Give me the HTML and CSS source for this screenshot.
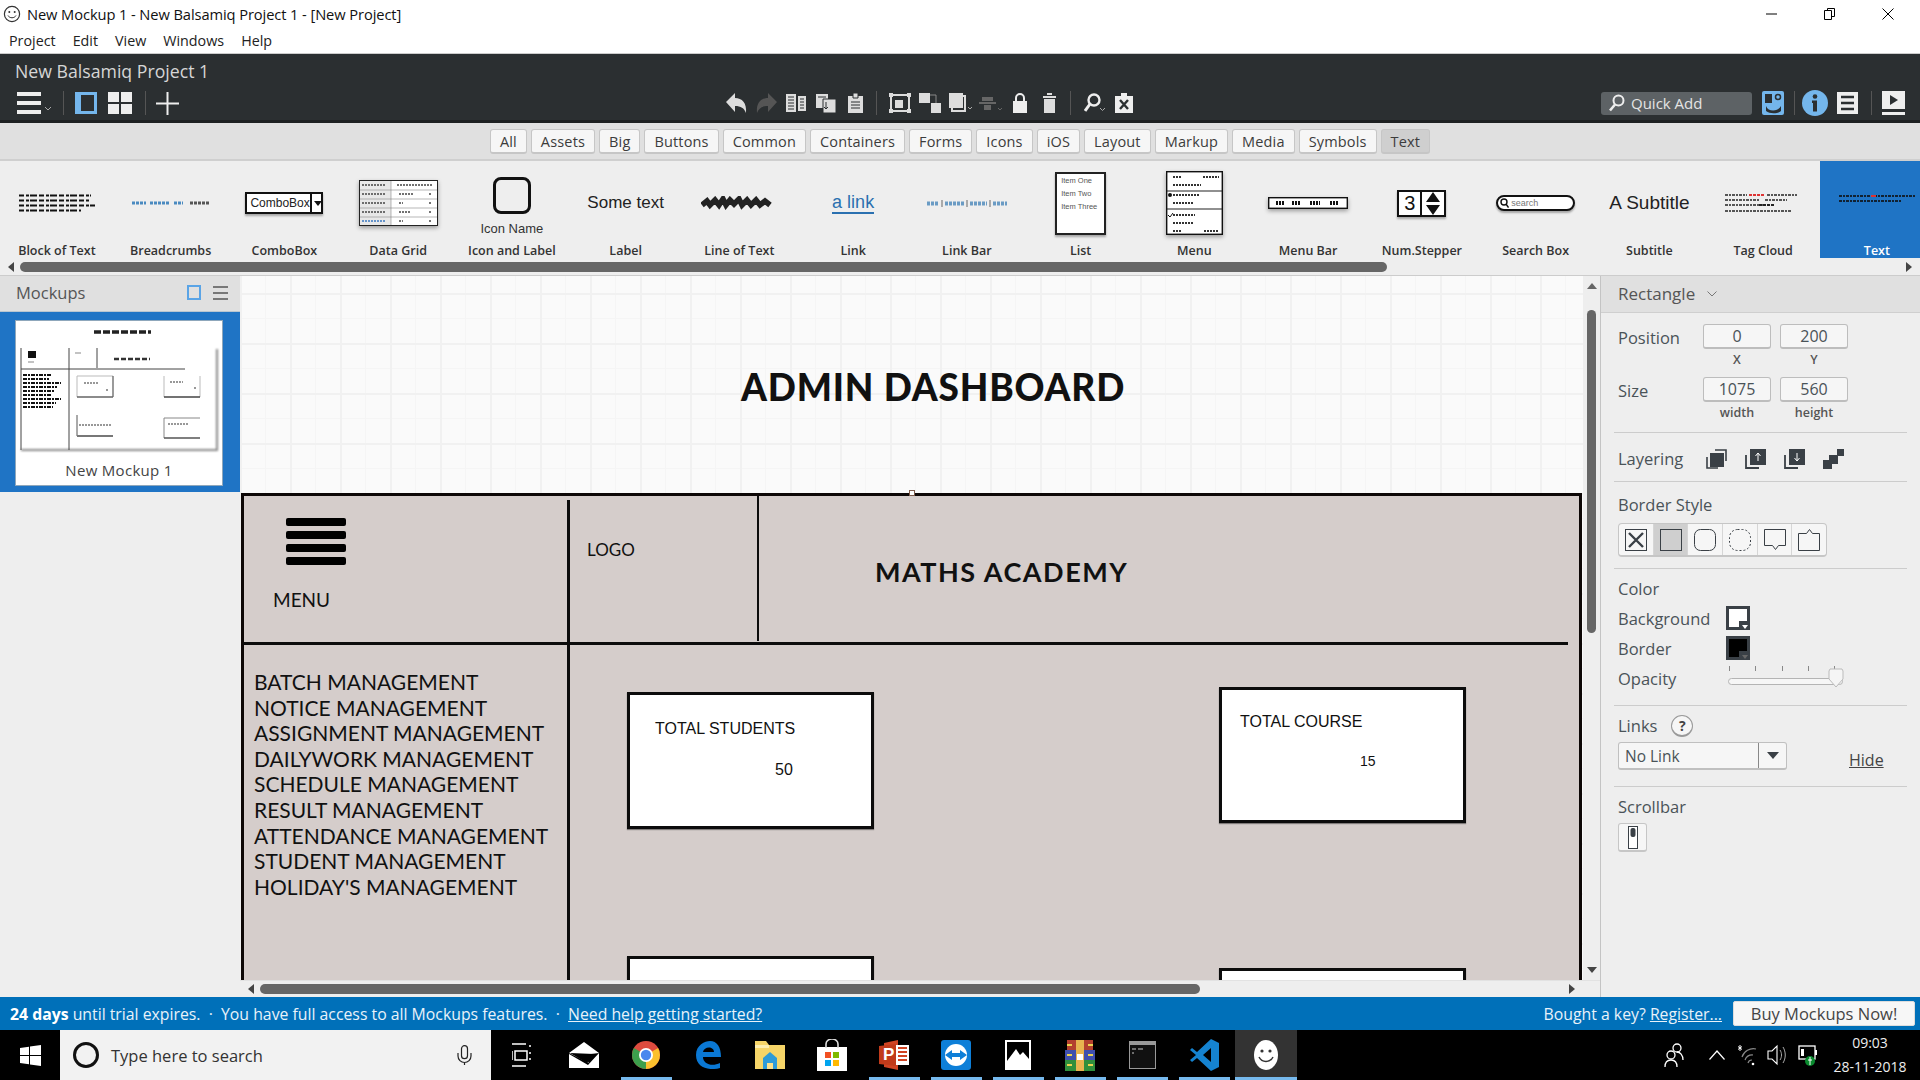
FILE: index.html
```html
<!DOCTYPE html>
<html lang="en">
<head>
<meta charset="utf-8">
<title>New Mockup 1 - New Balsamiq Project 1 - [New Project]</title>
<link rel="stylesheet" href="styles.css">
</head>
<body>
<div class="app">
  <header class="titlebar">
    <svg class="appicon" width="18" height="18" viewBox="0 0 18 18"><circle cx="9" cy="9" r="7.6" fill="#fff" stroke="#333" stroke-width="1.2"/><circle cx="6.3" cy="7" r="1" fill="#333"/><circle cx="11.7" cy="7" r="1" fill="#333"/><path d="M5 10.500c1.500 3 6.500 3 8 0" fill="none" stroke="#333"/></svg>
    <span class="titletext">New Mockup 1 - New Balsamiq Project 1 - [New Project]</span>
    <div class="winctl">
      <svg width="12" height="12" viewBox="0 0 12 12"><path d="M0 6h11" stroke="#000"/></svg>
      <svg width="12" height="12" viewBox="0 0 12 12"><path d="M3.500 2.500V.5h7v8h-3M.5 2.500h7v9h-7z" fill="none" stroke="#000"/></svg>
      <svg width="12" height="12" viewBox="0 0 12 12"><path d="M.5.5l11 11M11.500.5l-11 11" stroke="#000"/></svg>
    </div>
  </header>
  <nav class="menubar"><span>Project</span><span>Edit</span><span>View</span><span>Windows</span><span>Help</span></nav>

  <section class="toolbar">
    <div class="projname">New Balsamiq Project 1</div>
    <div class="toolrow">
      <div class="tgroup tleft">
        <svg width="36" height="22" viewBox="0 0 36 22"><path d="M0 0h24v4H0zM0 9h24v4H0zM0 18h24v4H0z" fill="#eee"/><path d="M28 15l3 3 3-3" fill="none" stroke="#aaa"/></svg>
        <i class="tsep s1"></i>
        <svg class="ic-panel" width="22" height="22" viewBox="0 0 22 22"><path d="M0 0h22v22H0z" fill="#74b6ec"/><path d="M6 3h13v16H6z" fill="#2b2f31"/></svg>
        <svg class="ic-grid" width="24" height="22" viewBox="0 0 24 22"><path d="M0 0h11v10H0zM13 0h11v10H13zM0 12h11v10H0zM13 12h11v10H13z" fill="#eee"/></svg>
        <i class="tsep s2"></i>
        <svg class="ic-plus" width="23" height="23" viewBox="0 0 23 23"><path d="M10.500 0h2v23h-2zM0 10.500h23v2H0z" fill="#eee"/></svg>
      </div>
      <div class="tgroup tcenter">
        <svg width="21" height="20" viewBox="0 0 21 20"><path d="M9 0v5c7 0 12 5 11 15-2-5-5-7-11-7v6L0 9z" fill="#ddd"/></svg>
        <svg width="21" height="20" viewBox="0 0 21 20"><path d="M12 0v5C5 5 0 10 1 20c2-5 5-7 11-7v6l9-10z" fill="#555"/></svg>
        <svg width="20" height="20" viewBox="0 0 20 20"><path d="M0 1h10v18H0z" fill="#ddd"/><path d="M2 4h6M2 7h6M2 10h6M2 13h6M2 16h6" stroke="#2b2f31"/><path d="M12 3h8v15h-8z" fill="#ddd"/><path d="M14 6h4M14 9h4M14 12h4M14 15h4" stroke="#2b2f31"/></svg>
        <svg width="20" height="20" viewBox="0 0 20 20"><path d="M0 1h12v14H0z" fill="#ddd"/><path d="M7 6h13v14H7z" fill="#ddd" stroke="#2b2f31"/><path d="M2 4h8M10 9v7l-2-2M10 16l2-2" stroke="#2b2f31" fill="none"/></svg>
        <svg width="15" height="20" viewBox="0 0 15 20"><path d="M0 3h15v17H0z" fill="#ddd"/><path d="M5 0h5v5H5z" fill="#ddd" stroke="#2b2f31"/><path d="M3 9h9M3 12h9M3 15h9" stroke="#2b2f31"/></svg>
        <i class="tsep"></i>
        <svg width="22" height="20" viewBox="0 0 22 20"><path d="M2 2h18v16H2z" fill="none" stroke="#ddd" stroke-width="2"/><path d="M0 0h4v4H0zM18 0h4v4h-4zM0 16h4v4H0zM18 16h4v4h-4z" fill="#ddd"/><path d="M6 7h8v8H6z" fill="#ddd"/></svg>
        <svg width="22" height="20" viewBox="0 0 22 20"><path d="M0 0h11v10H0zM12 10h10v10H12z" fill="#ddd"/><path d="M11 2h6v8" fill="none" stroke="#888"/></svg>
        <svg width="25" height="20" viewBox="0 0 25 20"><path d="M0 0h14v15H0z" fill="#ddd"/><path d="M14 3h2v15H3v-3" fill="none" stroke="#ddd" stroke-width="2"/><path d="M19 14l2 2 2-2" fill="none" stroke="#aaa"/></svg>
        <svg width="23" height="20" viewBox="0 0 23 20"><path d="M0 9h17v2H0zM3 4h11v4H3zM5 12h7v5H5z" fill="#666"/><path d="M19 15l2 2 2-2" fill="none" stroke="#666"/></svg>
        <svg width="14" height="20" viewBox="0 0 14 20"><path d="M0 8h14v12H0z" fill="#eee"/><path d="M3 8V5a4 4 0 0 1 8 0v3" fill="none" stroke="#eee" stroke-width="2"/></svg>
        <svg width="13" height="20" viewBox="0 0 13 20"><path d="M1 6h11v14H1zM0 3h13v2H0zM4 0h5v2H4z" fill="#ddd"/></svg>
        <i class="tsep"></i>
        <svg width="22" height="20" viewBox="0 0 22 20"><circle cx="10" cy="7" r="5.500" fill="none" stroke="#eee" stroke-width="2.400"/><path d="M6 11l-5 7" stroke="#eee" stroke-width="3"/><path d="M16 15l2.500 2.500 2.500-2.500" fill="none" stroke="#aaa"/></svg>
        <svg width="18" height="20" viewBox="0 0 18 20"><path d="M0 3h18v17H0z" fill="#eee"/><path d="M6 0h6v4H6z" fill="#eee"/><path d="M5 7l8 9M13 7l-8 9" stroke="#2b2f31" stroke-width="2.400"/></svg>
      </div>
      <div class="tgroup tright">
        <div class="quickadd">
          <svg width="18" height="18" viewBox="0 0 18 18"><circle cx="10.500" cy="6.500" r="5" fill="none" stroke="#eee" stroke-width="2"/><path d="M7 10.500l-5 6" stroke="#eee" stroke-width="2.600"/></svg>
          <span>Quick Add</span>
        </div>
        <svg width="22" height="24" viewBox="0 0 22 24"><rect width="22" height="24" rx="2" fill="#74b6ec"/><path d="M3 3h7v9H3z" fill="#2b2f31"/><circle cx="16" cy="6" r="2.500" fill="none" stroke="#2b2f31" stroke-width="1.500"/><path d="M4 15c2 6 12 6 15 0v5c-4 3-11 3-15 0z" fill="#2b2f31"/></svg>
        <i class="tsep"></i>
        <svg width="26" height="26" viewBox="0 0 26 26"><circle cx="13" cy="13" r="13" fill="#74b6ec"/><circle cx="13" cy="6.500" r="2.300" fill="#2b2f31"/><path d="M10 10.500h5v11h-4V13h-1z" fill="#2b2f31"/></svg>
        <svg width="21" height="22" viewBox="0 0 21 22"><path d="M0 0h21v22H0z" fill="#eee"/><path d="M4 5h13M4 11h13M4 17h13" stroke="#2b2f31" stroke-width="2.400"/></svg>
        <i class="tsep"></i>
        <svg width="23" height="24" viewBox="0 0 23 24"><path d="M0 0h23v18H0z" fill="#eee"/><path d="M8 4l8 5-8 5z" fill="#2b2f31"/><path d="M0 21h23v3H0z" fill="#eee"/></svg>
      </div>
    </div>
  </section>

  <section class="filters">
    <button class="chip">All</button><button class="chip">Assets</button><button class="chip">Big</button><button class="chip">Buttons</button><button class="chip">Common</button><button class="chip">Containers</button><button class="chip">Forms</button><button class="chip">Icons</button><button class="chip">iOS</button><button class="chip">Layout</button><button class="chip">Markup</button><button class="chip">Media</button><button class="chip">Symbols</button><button class="chip on">Text</button>
  </section>

  <section class="library">
    <div class="libitems">
      <div class="lib"><div class="pv"><svg class="soft" width="76" height="18" viewBox="0 0 76 18"><path d="M0 1.500h72M0 6.500h70M0 11.500h76M0 16.500h62" stroke="#111" stroke-width="2.200" stroke-dasharray="5 2 3 1 7 2"/></svg></div><span>Block of Text</span></div>
      <div class="lib"><div class="pv"><svg class="soft" width="78" height="6" viewBox="0 0 78 6"><path d="M0 3h14M18 3h20M42 3h9" stroke="#4a8ac0" stroke-width="3" stroke-dasharray="3 1"/><path d="M58 3h20" stroke="#555" stroke-width="3" stroke-dasharray="3 1"/></svg></div><span>Breadcrumbs</span></div>
      <div class="lib"><div class="pv"><div class="pcombo"><span>ComboBox</span><b></b></div></div><span>ComboBox</span></div>
      <div class="lib"><div class="pv"><svg class="soft shadow" width="79" height="46" viewBox="0 0 79 46"><rect x=".5" y=".5" width="78" height="45" fill="#fff" stroke="#222"/><rect x="1" y="1" width="31" height="44" fill="#e8e8e8"/><path d="M32 1v44M1 10h77M1 19h77M1 28h77M1 37h77" stroke="#888" stroke-width=".6"/><path d="M3 5h24M38 5h36M3 14h24M40 14h14M70 14h3M3 23h24M40 23h4M70 23h3M3 32h24M40 32h12M70 32h3M40 41h4M70 41h3" stroke="#444" stroke-width="1.500" stroke-dasharray="2 1"/><path d="M3 41h24" stroke="#3b78c0" stroke-width="1.500" stroke-dasharray="2 1"/></svg></div><span>Data Grid</span></div>
      <div class="lib"><div class="pv pvcol"><div class="picon"></div><span class="pname">Icon Name</span></div><span>Icon and Label</span></div>
      <div class="lib"><div class="pv"><span class="psome">Some text</span></div><span>Label</span></div>
      <div class="lib"><div class="pv"><svg class="soft" width="76" height="14" viewBox="0 0 76 14"><path d="M1 9l5-4 3 4 5-5 4 5 4-6 3 6 4-5 4 4 5-5 3 6 5-5 4 5 5-5 4 5 5-4 5 4" fill="none" stroke="#222" stroke-width="5.500"/></svg></div><span>Line of Text</span></div>
      <div class="lib"><div class="pv"><span class="plink">a link</span></div><span>Link</span></div>
      <div class="lib"><div class="pv"><svg class="soft" width="80" height="7" viewBox="0 0 80 7"><path d="M0 3.500h12M18 3.500h20M43 3.500h17M66 3.500h14" stroke="#6a9bc4" stroke-width="4" stroke-dasharray="3 1"/><path d="M15 0v7M40 0v7M63 0v7" stroke="#666"/></svg></div><span>Link Bar</span></div>
      <div class="lib"><div class="pv"><div class="plist"><span>Item One</span><span>Item Two</span><span>Item Three</span></div></div><span>List</span></div>
      <div class="lib"><div class="pv"><svg class="soft shadow" width="57" height="64" viewBox="0 0 57 64"><rect x=".7" y=".7" width="55.600" height="62.600" fill="#fff" stroke="#111" stroke-width="1.400"/><path d="M7 6h9M37 6h16M7 14h28M7 24h26M7 32h20M7 44h22M7 52h20M7 60h9M38 60h14" stroke="#333" stroke-width="2" stroke-dasharray="2 1"/><path d="M1 20h55M1 38h55" stroke="#222" stroke-width="1.200"/><circle cx="4" cy="24" r="2" fill="#111"/><path d="M2 44l2 2 3-4" fill="none" stroke="#111"/></svg></div><span>Menu</span></div>
      <div class="lib"><div class="pv"><svg class="soft shadow" width="80" height="12" viewBox="0 0 80 12"><rect x=".7" y=".7" width="78.600" height="10.600" fill="#fff" stroke="#111" stroke-width="1.400"/><path d="M8 6h8M24 6h8M42 6h10M62 6h9" stroke="#111" stroke-width="4" stroke-dasharray="2 1"/></svg></div><span>Menu Bar</span></div>
      <div class="lib"><div class="pv"><div class="pnum"><span>3</span><svg width="18" height="23" viewBox="0 0 18 23"><path d="M9 0l7 10H2zM9 23l7-10H2z" fill="#111"/></svg></div></div><span>Num.Stepper</span></div>
      <div class="lib"><div class="pv"><div class="psearch"><svg width="9" height="10" viewBox="0 0 9 10"><circle cx="4" cy="4" r="3" fill="none" stroke="#111" stroke-width="1.400"/><path d="M6 6l2.500 3.500" stroke="#111" stroke-width="1.400"/></svg><span>search</span></div></div><span>Search Box</span></div>
      <div class="lib"><div class="pv"><span class="psub">A Subtitle</span></div><span>Subtitle</span></div>
      <div class="lib"><div class="pv"><svg class="soft" width="76" height="20" viewBox="0 0 76 20"><path d="M0 2h22M42 2h30M0 7h34M40 7h22M0 12h48M0 18h66" stroke="#555" stroke-width="2" stroke-dasharray="3 1 2 1"/><path d="M24 2h16" stroke="#d33" stroke-width="2" stroke-dasharray="3 1"/><path d="M34 12h16" stroke="#222" stroke-width="2" stroke-dasharray="3 1"/></svg></div><span>Tag Cloud</span></div>
      <div class="lib sel"><div class="pv"><svg class="soft lifted" width="76" height="9" viewBox="0 0 76 9"><path d="M0 2h76M0 7h62" stroke="#123" stroke-width="2" stroke-dasharray="3 1 2 1"/><path d="M32 2h5" stroke="#d33" stroke-width="2"/></svg></div><span>Text</span></div>
    </div>
    <div class="libscroll">
      <svg width="6" height="10" viewBox="0 0 6 10"><path d="M6 0v10L0 5z" fill="#444"/></svg>
      <div class="libtrack"><div class="libthumb"></div></div>
      <svg width="6" height="10" viewBox="0 0 6 10"><path d="M0 0v10l6-5z" fill="#444"/></svg>
    </div>
  </section>

  <main class="work">
    <aside class="leftpanel">
      <div class="panelhead">
        <span class="mocktitle">Mockups</span>
        <i class="sqicon"></i>
        <svg width="15" height="14" viewBox="0 0 15 14"><path d="M0 1h15M0 7h15M0 13h15" stroke="#555" stroke-width="1.400"/></svg>
      </div>
      <div class="thumbwrap">
        <div class="thumb">
          <svg class="thumbpic" width="206" height="134" viewBox="0 0 206 134">
            <path class="tshadow" d="M201 28v101H5" fill="none" stroke="#888" stroke-width="2"/>
            <g class="tscrib">
              <path d="M78 11h57" stroke="#222" stroke-width="3.500" stroke-dasharray="7 2"/>
              <path d="M98 38h36" stroke="#333" stroke-width="2.500" stroke-dasharray="5 2"/>
              <path d="M5 27v102M5 48h164M53 27v102M81 27v20" stroke="#444" stroke-width="1"/>
              <path d="M12 30h8v7h-8z" fill="#111"/>
              <path d="M12 41h6M59 32h6" stroke="#888" stroke-width="1.200"/>
              <path d="M7 54h29M7 58h26M7 62h38M7 66h34M7 70h32M7 74h28M7 78h38M7 82h33M7 86h30" stroke="#111" stroke-width="2.200" stroke-dasharray="4 1 2 1"/>
              <path d="M61 76V55h36" fill="none" stroke="#bbb"/>
              <path d="M61 76h36M97 55v21" fill="none" stroke="#666" stroke-width="1.300"/>
              <path d="M148 76V55M184 55v21" fill="none" stroke="#bbb"/>
              <path d="M148 76h36" stroke="#444" stroke-width="1.500"/>
              <path d="M61 94v21" fill="none" stroke="#555"/>
              <path d="M61 115h36" stroke="#777" stroke-width="2"/>
              <path d="M148 117V97h36" fill="none" stroke="#888"/>
              <path d="M148 117h36" stroke="#555" stroke-width="1.400"/>
              <path d="M68 62h14M90 69h3M154 61h13M178 67h3M63 104h33M152 103h20" stroke="#777" stroke-width="1.400" stroke-dasharray="2 1"/>
            </g>
          </svg>
          <span class="thumblabel">New Mockup 1</span>
        </div>
      </div>
    </aside>

    <div class="center">
      <div class="centerrow">
        <div class="canvas">
          <div class="mk-title">ADMIN DASHBOARD</div>
          <div class="mk-rect"></div>
          <i class="mk-handle"></i>
          <i class="mk-h"></i>
          <i class="mk-v1"></i>
          <i class="mk-v2"></i>
          <div class="mk-burger"><i></i><i></i><i></i><i></i></div>
          <div class="mk-menu">MENU</div>
          <div class="mk-logo">LOGO</div>
          <div class="mk-maths">MATHS ACADEMY</div>
          <ul class="mk-list">
            <li>BATCH MANAGEMENT</li>
            <li>NOTICE MANAGEMENT</li>
            <li>ASSIGNMENT MANAGEMENT</li>
            <li>DAILYWORK MANAGEMENT</li>
            <li>SCHEDULE MANAGEMENT</li>
            <li>RESULT MANAGEMENT</li>
            <li>ATTENDANCE MANAGEMENT</li>
            <li>STUDENT MANAGEMENT</li>
            <li>HOLIDAY'S MANAGEMENT</li>
          </ul>
          <div class="mk-card c1"><div class="cardt">TOTAL STUDENTS</div><div class="cardv">50</div></div>
          <div class="mk-card c2"><div class="cardt">TOTAL COURSE</div><div class="cardv">15</div></div>
          <div class="mk-card c3"></div>
          <div class="mk-card c4"></div>
        </div>
        <div class="vscroll">
          <svg width="10" height="6" viewBox="0 0 10 6"><path d="M5 0l5 6H0z" fill="#666"/></svg>
          <div class="vthumb"></div>
          <svg width="10" height="6" viewBox="0 0 10 6"><path d="M5 6l5-6H0z" fill="#444"/></svg>
        </div>
      </div>
      <div class="hscroll">
        <svg width="6" height="10" viewBox="0 0 6 10"><path d="M6 0v10L0 5z" fill="#444"/></svg>
        <div class="hthumb"></div>
        <svg width="6" height="10" viewBox="0 0 6 10"><path d="M0 0v10l6-5z" fill="#444"/></svg>
      </div>
    </div>

    <aside class="props">
      <div class="prophead"><span>Rectangle</span><svg width="10" height="6" viewBox="0 0 10 6"><path d="M.5.5L5 5 9.500.5" fill="none" stroke="#777"/></svg></div>
      <div class="propbody">
        <div class="pos-row"><span class="plabel">Position</span><div class="fld"><div class="inp">0</div><small>X</small></div><div class="fld"><div class="inp">200</div><small>Y</small></div></div>
        <div class="pos-row size"><span class="plabel">Size</span><div class="fld"><div class="inp">1075</div><small>width</small></div><div class="fld"><div class="inp">560</div><small>height</small></div></div>
        <hr class="div d1">
        <div class="layer"><span class="plabel">Layering</span>
          <svg width="21" height="20" viewBox="0 0 21 20"><path d="M4 4h14v14H4z" fill="#3a4046"/><path d="M1 8v11h11M9 1h11v11" fill="none" stroke="#3a4046" stroke-width="1.600"/></svg>
          <svg width="21" height="20" viewBox="0 0 21 20"><path d="M5 0h16v16H5z" fill="#3a4046"/><path d="M1 6v13h13" fill="none" stroke="#3a4046" stroke-width="1.800"/><path d="M13 12V4M10.500 7L13 4l2.500 3" fill="none" stroke="#fff"/></svg>
          <svg width="21" height="20" viewBox="0 0 21 20"><path d="M5 0h16v16H5z" fill="#3a4046"/><path d="M1 6v13h13" fill="none" stroke="#3a4046" stroke-width="1.800"/><path d="M13 4v8M10.500 9l2.500 3 2.500-3" fill="none" stroke="#fff"/></svg>
          <svg width="21" height="20" viewBox="0 0 21 20"><path d="M0 11h9v9H0zM6 6h9v9H6z" fill="#3a4046"/><path d="M14 0h7v7h-7z" fill="#3a4046"/></svg>
        </div>
        <hr class="div d2">
        <div class="plabel bs">Border Style</div>
        <div class="bsgroup">
          <div class="bsbtn"><svg width="22" height="22" viewBox="0 0 22 22"><rect x=".5" y=".5" width="21" height="21" fill="none" stroke="#3a4046"/><path d="M4 4l14 14M18 4L4 18" stroke="#3a4046" stroke-width="2.400"/></svg></div>
          <div class="bsbtn on"><svg width="22" height="22" viewBox="0 0 22 22"><rect x=".5" y=".5" width="21" height="21" fill="#cfcfcf" stroke="#3a4046"/></svg></div>
          <div class="bsbtn"><svg width="22" height="22" viewBox="0 0 22 22"><rect x=".5" y=".5" width="21" height="21" rx="6" fill="none" stroke="#3a4046"/></svg></div>
          <div class="bsbtn"><svg width="22" height="22" viewBox="0 0 22 22"><rect x=".5" y=".5" width="21" height="21" rx="8" fill="none" stroke="#3a4046" stroke-dasharray="2 2"/></svg></div>
          <div class="bsbtn"><svg width="22" height="22" viewBox="0 0 22 22"><path d="M.5.5h21v16h-7l-3 4-3-4h-8z" fill="none" stroke="#3a4046"/></svg></div>
          <div class="bsbtn"><svg width="22" height="22" viewBox="0 0 22 22"><path d="M.5 4.500h8l3-4 3 4h7v17H.5z" fill="none" stroke="#3a4046"/></svg></div>
        </div>
        <hr class="div d3">
        <div class="plabel cl">Color</div>
        <div class="colrow"><span class="plabel">Background</span><div class="swatch white"></div></div>
        <div class="colrow"><span class="plabel">Border</span><div class="swatch black"></div></div>
        <div class="colrow op"><span class="plabel">Opacity</span>
          <div class="slider"><div class="ticks"><i></i><i></i><i></i><i></i><i></i></div><div class="strack"></div><svg class="sthumb" width="16" height="20" viewBox="0 0 16 20"><path d="M2 1h12l1 2v8l-7 8-7-8V3z" fill="#f5f5f5" stroke="#bbb"/></svg></div>
        </div>
        <hr class="div d4">
        <div class="linkhead"><span class="plabel">Links</span><span class="qmark">?</span></div>
        <div class="linkrow">
          <div class="select"><span>No Link</span><b><svg width="12" height="7" viewBox="0 0 12 7"><path d="M0 0h12L6 7z" fill="#3a4046"/></svg></b></div>
          <a class="hide">Hide</a>
        </div>
        <hr class="div d5">
        <div class="plabel sb">Scrollbar</div>
        <div class="sbbtn"><svg width="10" height="23" viewBox="0 0 10 23"><rect x=".5" y=".5" width="9" height="22" fill="#fff" stroke="#3a4046"/><rect x="2.500" y="2" width="5" height="9" rx="2" fill="#3a4046"/></svg></div>
      </div>
    </aside>
  </main>

  <section class="trial">
    <span><b>24 days</b> until trial expires. &nbsp;·&nbsp; You have full access to all Mockups features. &nbsp;·&nbsp; <u>Need help getting started?</u></span>
    <span class="trialr">Bought a key? <u>Register...</u></span>
    <button class="buy">Buy Mockups Now!</button>
  </section>

  <footer class="taskbar">
    <div class="start"><svg width="21" height="21" viewBox="0 0 21 21"><path d="M0 3l9-1.300V10H0zM10 1.500L21 0v10H10zM0 11h9v8.300L0 18zM10 11h11v10l-11-1.500z" fill="#fff"/></svg></div>
    <div class="search">
      <i class="ring"></i>
      <span class="stext">Type here to search</span>
      <svg class="mic" width="15" height="20" viewBox="0 0 15 20"><rect x="4.500" y=".7" width="6" height="13" rx="3" fill="none" stroke="#222" stroke-width="1.200"/><path d="M1 8v3a6.500 6.500 0 0 0 13 0V8M7.500 17.500V20" fill="none" stroke="#222" stroke-width="1.200"/></svg>
    </div>
    <div class="tbslot"><svg width="20" height="24" viewBox="0 0 20 24"><path d="M0 1h14M3 8h12v9H3zM0 23h14M18 2v2M18 9v2M18 15v2M0 17V8" fill="none" stroke="#fff" stroke-width="1.500"/></svg></div>
    <div class="tbslot"><svg width="30" height="26" viewBox="0 0 30 26"><path d="M0 11L15 0l15 11L14 13l6 8L0 11z" fill="#fff"/><path d="M0 12l19 11 11-12v15H0z" fill="#fff"/><path d="M1 11l24 1-7 9z" fill="#000"/></svg></div>
    <div class="tbslot run"><svg width="28" height="28" viewBox="0 0 28 28"><circle cx="14" cy="14" r="14" fill="#dd4b3e"/><path d="M14 14L26.100 7A14 14 0 0 1 14 28z" fill="#fbc02d"/><path d="M14 14l-.1 14A14 14 0 0 1 1.900 7z" fill="#3c9f4c"/><circle cx="14" cy="14" r="7" fill="#fff"/><circle cx="14" cy="14" r="5.200" fill="#4a87ee"/></svg></div>
    <div class="tbslot"><svg width="25" height="28" viewBox="0 0 25 28"><path d="M25 16H7c0 7 9 10 17 6v5c-11 3-24 0-24-13C0 4 9 0 14 0c7 0 11 6 11 16zM7 11h11c0-6-10-6-11 0z" fill="#0a78d4"/></svg></div>
    <div class="tbslot"><svg width="30" height="28" viewBox="0 0 30 28"><path d="M0 0h11l3 4h16v24H0z" fill="#f6d568"/><path d="M0 4h14v3H0z" fill="#fdeeb0"/><path d="M8 17l7-6 7 6v11H8z" fill="#2d9bd8"/><path d="M12 22h6v6h-6z" fill="#fce08a"/></svg></div>
    <div class="tbslot"><svg width="30" height="32" viewBox="0 0 30 32"><path d="M0 8h30v24H0z" fill="#fff"/><path d="M9 9V5a6 5 0 0 1 12 0v4" fill="none" stroke="#ddd" stroke-width="1.600"/><path d="M8 13h6v6H8z" fill="#f25022"/><path d="M16 13h6v6h-6z" fill="#7fba00"/><path d="M8 21h6v6H8z" fill="#00a4ef"/><path d="M16 21h6v6h-6z" fill="#ffb900"/></svg></div>
    <div class="tbslot run"><svg width="30" height="30" viewBox="0 0 30 30"><path d="M5 3l14-3v30L5 27z" fill="#d04423"/><path d="M17 5h13v20H17z" fill="#fff"/><path d="M19 8h9M19 12h9M19 16h9M19 20h9" stroke="#d04423" stroke-width="2"/><path d="M0 6l17-2v22L0 24z" fill="#c13b1b"/><text x="4" y="20" class="pptp">P</text></svg></div>
    <div class="tbslot run"><svg width="30" height="30" viewBox="0 0 30 30"><rect width="30" height="30" rx="3" fill="#0e7fd8"/><circle cx="15" cy="15" r="11" fill="#fff"/><path d="M4 15l7-5v3h8v-3l7 5-7 5v-3h-8v3z" fill="#0e7fd8"/></svg></div>
    <div class="tbslot run"><svg width="26" height="30" viewBox="0 0 26 30"><path d="M0 0h26v30H0z" fill="#fff"/><path d="M2 2h22v17l-6-7-3 3-4-6-9 12z" fill="#000"/></svg></div>
    <div class="tbslot run"><svg width="30" height="31" viewBox="0 0 30 31"><path d="M0 10h30v10H0z" fill="#3f4fae"/><path d="M2 0h26v10H2z" fill="#b3402f"/><path d="M0 20h30v11H0z" fill="#2f8f3c"/><path d="M11 0h8v31h-8z" fill="#e8b450"/><path d="M12 14h6v6h-6z" fill="#fff"/><path d="M2 5h5M2 15h5M2 25h5M23 5h5M23 15h5M23 25h5" stroke="#ead24e" stroke-width="2"/></svg></div>
    <div class="tbslot run"><svg width="27" height="28" viewBox="0 0 27 28"><path d="M0 0h27v28H0z" fill="#111" stroke="#999" stroke-width="2"/><path d="M0 0h27v4H0z" fill="#999"/><path d="M3 8h4M9 8h5M3 12h2" stroke="#ccc" stroke-width="1.200"/></svg></div>
    <div class="tbslot run"><svg width="29" height="32" viewBox="0 0 29 32"><path d="M21 0l8 4v24l-8 4L7 19l-5 4-2-2 6-5-6-5 2-2 5 4zM21 9l-8 7 8 7z" fill="#1583d0"/></svg></div>
    <div class="tbslot active"><svg width="24" height="30" viewBox="0 0 24 30"><ellipse cx="12" cy="15" rx="12" ry="15" fill="#fff"/><circle cx="8" cy="11" r="1.600" fill="#333"/><circle cx="16" cy="11" r="1.600" fill="#333"/><path d="M5 17c3 6 11 6 14 0" fill="none" stroke="#333" stroke-width="1.500"/></svg></div>
    <div class="tray">
      <svg width="20" height="26" viewBox="0 0 20 26"><circle cx="13" cy="6" r="4" fill="none" stroke="#fff" stroke-width="1.300"/><circle cx="7" cy="13" r="4" fill="none" stroke="#fff" stroke-width="1.300"/><path d="M1 25c0-5 3-7 6-7s6 2 6 7M13 10c3 0 6 3 6 8" fill="none" stroke="#fff" stroke-width="1.300"/></svg>
      <svg class="t-up" width="16" height="10" viewBox="0 0 16 10"><path d="M.5 9.500L8 1l7.500 8.500" fill="none" stroke="#fff" stroke-width="1.200"/></svg>
      <svg class="t-wifi" width="20" height="22" viewBox="0 0 20 22"><path d="M4 13a12 12 0 0 1 14-8M7 16a8 8 0 0 1 8-5M10 19a4 4 0 0 1 4-3" fill="none" stroke="#888" stroke-width="1.200"/><circle cx="15" cy="20" r="1.300" fill="#fff"/><path d="M2 1v6M0 2.500l4 3M4 2.500l-4 3" stroke="#fff"/></svg>
      <svg class="t-vol" width="20" height="22" viewBox="0 0 20 22"><path d="M1 7h4l5-5v18l-5-5H1z" fill="none" stroke="#fff" stroke-width="1.100"/><path d="M13 6c2 3 2 7 0 10M16 3c3 5 3 11 0 16" fill="none" stroke="#aaa"/></svg>
      <svg class="t-bat" width="20" height="24" viewBox="0 0 20 24"><rect x="1" y="3" width="16" height="13" fill="none" stroke="#fff" stroke-width="1.300"/><rect x="3" y="6" width="3" height="7" fill="#fff"/><rect x="17" y="7" width="2" height="5" fill="#fff"/><circle cx="12" cy="18" r="5" fill="#0a8a2e"/><path d="M12 14v8M10 17h4" stroke="#fff"/></svg>
      <div class="clock"><span>09:03</span><span>28-11-2018</span></div>
    </div>
  </footer>
</div>
</body>
</html>
```
FILE: styles.css
```css
* { box-sizing: border-box; }
html, body { margin: 0; padding: 0; }
body { font-family: "Open Sans", "Noto Sans", sans-serif; color: #222; background: #fff; }
button { font-family: inherit; }
.app { width: 1920px; height: 1080px; display: flex; flex-direction: column; overflow: hidden; }

/* Window chrome */
.titlebar { height: 27px; display: flex; align-items: center; padding-left: 3px; background: #fff; }
.appicon { margin-right: 6px; }
.titletext { font-size: 14.700px; letter-spacing: -.1px; color: #111; }
.winctl { margin-left: auto; display: flex; gap: 46px; padding-right: 26px; }
.menubar { height: 26px; display: flex; align-items: center; padding-left: 9px; gap: 17px; font-size: 14.300px; color: #222; background: #fff; }

/* Dark toolbar */
.toolbar { height: 70px; background: #2b2f31; padding-top: 5px; border-top: 1px solid #ccc; border-bottom: 3px solid #1d2021; }
.projname { height: 25px; line-height: 25px; padding-left: 15px; font-size: 17.700px; color: #d6d6d6; }
.toolrow { display: flex; align-items: center; margin-top: 6px; height: 26px; }
.tgroup { display: flex; align-items: center; }
.tsep { width: 1px; height: 24px; background: #555; display: block; flex: none; }
.tleft { padding-left: 17px; }
.tleft .s1 { margin: 0 11px 0 10px; }
.ic-grid { margin-left: 11px; }
.tleft .s2 { margin: 0 10px 0 13px; }
.tcenter { margin-left: 547px; }
.tcenter > :nth-child(2), .tcenter > :nth-child(3) { margin-left: 9px; }
.tcenter > :nth-child(4) { margin-left: 10px; }
.tcenter > :nth-child(5), .tcenter > :nth-child(7) { margin-left: 12px; }
.tcenter > :nth-child(6), .tcenter > :nth-child(14) { margin-left: 13px; }
.tcenter > :nth-child(8), .tcenter > :nth-child(9) { margin-left: 8px; }
.tcenter > :nth-child(10) { margin-left: 5px; }
.tcenter > :nth-child(11) { margin-left: 11px; }
.tcenter > :nth-child(12) { margin-left: 16px; }
.tcenter > :nth-child(13) { margin-left: 14px; }
.tcenter > :nth-child(15) { margin-left: 9px; }
.tright { margin-left: auto; padding-right: 15px; }
.tright > :nth-child(2), .tright > :nth-child(3), .tright > :nth-child(7) { margin-left: 10px; }
.tright > :nth-child(4) { margin-left: 7px; }
.tright > :nth-child(5) { margin-left: 9px; }
.tright > :nth-child(6) { margin-left: 13px; }
.quickadd { width: 151px; height: 23px; background: #5d6265; border-radius: 3px; display: flex; align-items: center; gap: 5px; padding-left: 7px; color: #e4e4e4; font-size: 15px; }

/* Filter chips */
.filters { height: 38px; background: #e0e0e0; display: flex; justify-content: center; gap: 4px; padding: 6px 0 0 0; border-bottom: 2px solid #cfcfcf; }
.chip { height: 25px; padding: 0 9px; font-size: 14.500px; letter-spacing: .16px; color: #3c3c3c; background: #f6f6f6; border: 1px solid #c6c6c6; border-bottom-width: 2px; border-radius: 3px; }
.chip.on { background: #cfcfcf; }

/* Component library */
.library { height: 115px; background: #eee; display: flex; flex-direction: column; border-bottom: 1px solid #ccc; }
.libitems { display: flex; height: 98px; }
.lib { width: 113.750px; flex: none; display: flex; flex-direction: column; align-items: center; font-size: 12.500px; font-weight: 600; color: #333; }
.lib.sel { background: #1f74c5; color: #fff; height: 97px; }
.lib > span { height: 15px; line-height: 15px; white-space: nowrap; }
.pv { height: 82px; flex: none; width: 100%; display: flex; align-items: center; justify-content: center; padding-top: 2px; }
.pvcol { flex-direction: column; padding-top: 8px; gap: 7px; }
.soft { filter: blur(.5px); }
.shadow { filter: blur(.4px) drop-shadow(0 2px 2px rgba(0,0,0,.35)); }
.lifted { margin-bottom: 10px; }
.pcombo { width: 78px; height: 22px; background: #fff; border: 2px solid #111; display: flex; font-size: 12px; line-height: 18px; color: #222; box-shadow: 0 2px 2px rgba(0,0,0,.3); font-weight: 400; }
.pcombo span { flex: 1; padding-left: 3px; font-family: "Liberation Sans", sans-serif; }
.pcombo b { width: 15px; border-left: 2px solid #111; position: relative; }
.pcombo b::after { content: ""; position: absolute; left: 2px; top: 7px; border: 4px solid transparent; border-top: 5px solid #111; }
.picon { width: 38px; height: 37px; border: 3px solid #111; border-radius: 8px; filter: blur(.4px); }
.pname { font: 400 13px "Liberation Sans", sans-serif; color: #333; }
.psome { font: 400 17px "Liberation Sans", sans-serif; color: #222; }
.plink { font: 400 18px "Liberation Sans", sans-serif; color: #2a70b0; border-bottom: 2px solid #2a70b0; line-height: 20px; }
.plist { width: 51px; height: 63px; background: #fff; border: 2px solid #222; display: flex; flex-direction: column; gap: 6px; padding: 3px 4px; font: 400 7.500px/7px "Liberation Sans", sans-serif; color: #555; box-shadow: 0 2px 2px rgba(0,0,0,.3); }
.pnum { width: 49px; height: 27px; background: #fff; border: 2px solid #111; display: flex; font: 400 20px/23px "Liberation Sans", sans-serif; color: #111; box-shadow: 0 2px 2px rgba(0,0,0,.3); }
.pnum span { flex: 1; text-align: center; border-right: 2px solid #111; }
.pnum svg { width: 18px; margin: 0 2px; }
.psearch { width: 79px; height: 16px; background: #fff; border: 2px solid #111; border-radius: 8px; display: flex; align-items: center; gap: 2px; padding-left: 2px; font: 400 9px "Liberation Sans", sans-serif; color: #777; box-shadow: 0 2px 2px rgba(0,0,0,.3); }
.psub { font: 400 19px "Liberation Sans", sans-serif; color: #222; }
.libscroll { height: 16px; display: flex; align-items: center; padding: 0 8px 0 8px; }
.libtrack { flex: 1; padding: 0 0 0 6px; margin-right: 6px; }
.libthumb { width: 1367px; height: 10px; border-radius: 5px; background: #666; }

/* Main area */
.work { height: 721px; display: flex; }
.leftpanel { width: 240px; background: #eee; display: flex; flex-direction: column; }
.panelhead { height: 36px; background: #e0e0e0; display: flex; align-items: center; padding-left: 16px; padding-right: 12px; padding-bottom: 2px; border-bottom: 1px solid #b9c6d0; }
.mocktitle { font-size: 16.500px; color: #555; margin-right: auto; }
.sqicon { width: 14px; height: 15px; border: 2px solid #5aa4e6; margin-right: 12px; display: block; }
.thumbwrap { height: 180px; background: #1f74c5; padding: 8px 17px 6px 15px; }
.thumb { height: 166px; background: #fff; border: 1px solid #8fa7bb; display: flex; flex-direction: column; align-items: center; }
.thumbpic { flex: none; }
.tscrib { filter: blur(.7px); }
.tshadow { filter: blur(1px); }
.thumblabel { font-size: 15px; color: #444; line-height: 26px; margin-top: 2px; letter-spacing: .3px; }

.center { flex: 1; display: flex; flex-direction: column; min-width: 0; }
.centerrow { flex: 1; display: flex; min-height: 0; }
.canvas {
  flex: 1; position: relative; overflow: hidden; background-color: #fafafa;
  background-image:
    linear-gradient(#f1f1f1 2px, transparent 2px),
    linear-gradient(90deg, #f1f1f1 2px, transparent 2px),
    linear-gradient(#f5f5f5 1px, transparent 1px),
    linear-gradient(90deg, #f5f5f5 1px, transparent 1px);
  background-size: 50px 50px, 50px 50px, 25px 25px, 25px 25px;
  background-position: 0 17px, 0 0, 0 17px, 0 0;
}
.mk-rect { position: absolute; left: 1px; top: 217px; width: 1341px; height: 600px; background: #d5cdcb; border: 3px solid #0d0706; }
.mk-handle { position: absolute; left: 669px; top: 214px; width: 6px; height: 6px; background: #fff; border: 1px solid #7b5a4a; }
.mk-h { position: absolute; left: 3px; top: 366px; width: 1325px; height: 3px; background: #0c0c0c; }
.mk-v1 { position: absolute; left: 327px; top: 224px; width: 3px; height: 500px; background: #0c0c0c; }
.mk-v2 { position: absolute; left: 517px; top: 220px; width: 2px; height: 145px; background: #0c0c0c; }
.mk-burger { position: absolute; left: 46px; top: 242px; width: 60px; display: flex; flex-direction: column; gap: 5px; }
.mk-burger i { display: block; height: 8px; border-radius: 2px; background: #000; }
.mk-title, .mk-menu, .mk-logo, .mk-maths, .mk-list, .cardt, .cardv { font-family: Lato, sans-serif; color: #111; white-space: nowrap; }
.mk-title { position: absolute; left: 501px; top: 86px; font-size: 37px; line-height: 50px; font-weight: 900; letter-spacing: .8px; }
.mk-menu { position: absolute; left: 33px; top: 309px; font-size: 19px; line-height: 30px; }
.mk-logo { position: absolute; left: 347px; top: 259px; font-size: 17px; line-height: 30px; }
.mk-maths { position: absolute; left: 635px; top: 276px; font-size: 27px; line-height: 40px; font-weight: 700; letter-spacing: 1.500px; }
.mk-list { position: absolute; left: 14px; top: 393px; margin: 0; padding: 0; list-style: none; font-size: 21px; line-height: 25.600px; }
.mk-card { position: absolute; width: 247px; background: #fff; border: 3px solid #0c0c0c; box-shadow: 0 1px 1px rgba(0,0,0,.4); }
.c1 { left: 387px; top: 416px; height: 137px; padding: 24px 0 0 25px; }
.c2 { left: 979px; top: 411px; height: 136px; padding: 22px 0 0 18px; }
.c3 { left: 387px; top: 680px; height: 100px; }
.c4 { left: 979px; top: 692px; height: 100px; }
.cardt { font-family: "Liberation Sans", sans-serif; font-size: 16px; line-height: 20px; }
.cardv { font-family: "Liberation Sans", sans-serif; font-size: 16px; line-height: 20px; margin-top: 21px; margin-left: 120px; }
.c2 .cardv { margin-left: 120px; font-size: 14px; margin-top: 19px; }

.vscroll { width: 17px; background: #eee; display: flex; flex-direction: column; align-items: center; padding-top: 7px; padding-bottom: 7px; }
.vthumb { width: 9px; height: 323px; background: #666; border-radius: 5px; margin-top: 21px; margin-bottom: auto; }
.hscroll { height: 17px; background: #eee; border-top: 1px solid #e2e2e2; display: flex; align-items: center; padding: 0 25px 0 8px; }
.hthumb { width: 940px; height: 10px; border-radius: 5px; background: #666; margin-left: 6px; margin-right: auto; }

/* Properties panel */
.props { width: 320px; background: #eee; border-left: 1px solid #c4c4c4; display: flex; flex-direction: column; font-size: 16.500px; color: #4a5358; }
.prophead { height: 37px; background: #e0e0e0; display: flex; align-items: center; gap: 12px; padding-left: 17px; padding-bottom: 1px; border-bottom: 1px solid #cfcfcf; font-size: 17px; color: #555; }
.propbody { padding: 11px 13px 0 13px; display: flex; flex-direction: column; align-items: stretch; }
.plabel { color: #4a5358; }
.pos-row { display: flex; padding-left: 4px; height: 53px; }
.pos-row .plabel { width: 85px; padding-top: 2px; }
.pos-row.size { height: 52px; }
.fld { width: 68px; margin-right: 9px; display: flex; flex-direction: column; align-items: center; }
.inp { width: 68px; height: 25px; background: #f6f6f6; border: 1px solid #bdbdbd; border-bottom-width: 2px; border-radius: 3px; text-align: center; line-height: 22px; font-size: 16px; }
.fld small { font-size: 12.500px; font-weight: 600; line-height: 21px; color: #555; }
hr.div { width: 293px; flex: none; margin: 0; border: 0; border-top: 1px solid #ccc; }
hr.d1 { margin-top: 3px; }
.layer { height: 48px; display: flex; align-items: center; padding: 3px 0 0 4px; gap: 18px; }
.layer .plabel { width: 70px; margin-right: 0; }
.bs { padding: 13px 0 8px 4px; line-height: 20px; }
.bsgroup { margin-left: 4px; width: 209px; height: 34px; display: flex; background: #f6f6f6; border: 1px solid #c6c6c6; border-bottom-width: 2px; border-radius: 4px; }
.bsbtn { flex: 1; display: flex; align-items: center; justify-content: center; border-right: 1px solid #d6d6d6; }
.bsbtn.on { background: #cfcfcf; }
.bsbtn:last-child { border-right: 0; }
hr.d3 { margin-top: 11px; }
.cl { padding: 10px 0 0 4px; line-height: 20px; }
.colrow { display: flex; align-items: center; height: 30px; padding-left: 4px; }
.colrow .plabel { width: 108px; }
.cl + .colrow { margin-top: 4px; }
.swatch { width: 24px; height: 24px; border: 3px solid #3a4046; position: relative; }
.swatch.white { background: #fff; }
.swatch.black { background: #000; }
.swatch::after { content: ""; position: absolute; right: -3px; bottom: -3px; width: 11px; height: 9px; background: #3a4046; }
.swatch::before { content: ""; position: absolute; right: -1px; bottom: -2px; z-index: 1; border: 3px solid transparent; border-top: 4px solid #fff; border-bottom: 0; }
.swatch.black::before { border-top-color: #666; }
.slider { position: relative; width: 118px; height: 26px; margin-left: 2px; }
.ticks { position: absolute; left: 1px; top: 1px; width: 106px; display: flex; justify-content: space-between; }
.ticks i { display: block; width: 1px; height: 5px; background: #888; }
.strack { position: absolute; left: 0; top: 13px; width: 115px; height: 7px; border: 1px solid #b4b4b4; border-radius: 4px; background: #f6f6f6; }
.sthumb { position: absolute; left: 100px; top: 3px; }
hr.d4 { margin-top: 12px; }
.linkhead { display: flex; align-items: center; height: 39px; padding-left: 4px; gap: 12px; }
.qmark { width: 22px; height: 22px; border-radius: 50%; border: 1px solid #999; background: #f6f6f6; border-bottom-width: 2px; text-align: center; font-size: 14px; font-weight: 700; line-height: 19px; color: #444; margin-left: 2px; }
.linkrow { display: flex; height: 28px; padding-left: 4px; margin-top: -3px; }
.select { width: 169px; height: 28px; display: flex; background: #f6f6f6; border: 1px solid #c0c0c0; border-bottom-width: 2px; border-radius: 3px; }
.select span { flex: 1; padding-left: 6px; line-height: 27px; font-size: 15.500px; }
.select b { width: 28px; border-left: 1px solid #888; display: flex; align-items: center; justify-content: center; }
.hide { margin-left: 62px; margin-top: 6px; line-height: 24px; text-decoration: underline; font-size: 16px; color: #444; }
hr.d5 { margin-top: 16px; }
.sb { padding: 10px 0 6px 4px; line-height: 20px; }
.sbbtn { margin-left: 4px; width: 29px; height: 29px; display: flex; align-items: center; justify-content: center; background: #f6f6f6; border: 1px solid #c6c6c6; border-bottom-width: 2px; border-radius: 3px; }

/* Trial bar */
.trial { height: 33px; background: #0070b9; color: #e8f2fa; font-size: 15.800px; display: flex; align-items: center; padding-left: 10px; padding-right: 5px; }
.trial b { color: #fff; }
.trialr { margin-left: auto; margin-right: 11px; }
.buy { width: 182px; height: 25px; background: #f7f7f7; border: 1px solid #ddd; border-radius: 2px; font-size: 16.500px; color: #444; padding: 0; }

/* Task bar */
.taskbar { height: 50px; background: #000; display: flex; align-items: stretch; color: #fff; }
.start { width: 60px; display: flex; align-items: center; justify-content: center; }
.search { width: 431px; background: #f2f2f2; display: flex; align-items: center; padding-left: 13px; color: #333; }
.ring { width: 26px; height: 26px; border: 3px solid #111; border-radius: 50%; display: block; }
.stext { font-size: 16.500px; margin-left: 12px; margin-right: auto; }
.mic { margin-right: 19px; }
.tbslot { width: 62px; flex: none; display: flex; align-items: center; justify-content: center; position: relative; }
.tbslot.run::after { content: ""; position: absolute; left: 6px; right: 5px; bottom: 0; height: 3px; background: #76b9ed; }
.tbslot.active { background: #333; }
.tbslot.active::after { content: ""; position: absolute; left: 0; right: 0; bottom: 0; height: 3px; background: #76b9ed; }
.pptp { font: 700 17px "Liberation Sans", sans-serif; fill: #fff; }
.tray { margin-left: auto; display: flex; align-items: center; padding-right: 5px; }
.t-up { margin-left: 25px; }
.t-wifi { margin-left: 13px; }
.t-vol { margin-left: 9px; }
.t-bat { margin-left: 11px; }
.clock { width: 90px; margin-left: 7px; display: flex; flex-direction: column; align-items: center; font-size: 14px; line-height: 24px; color: #eee; }
```
